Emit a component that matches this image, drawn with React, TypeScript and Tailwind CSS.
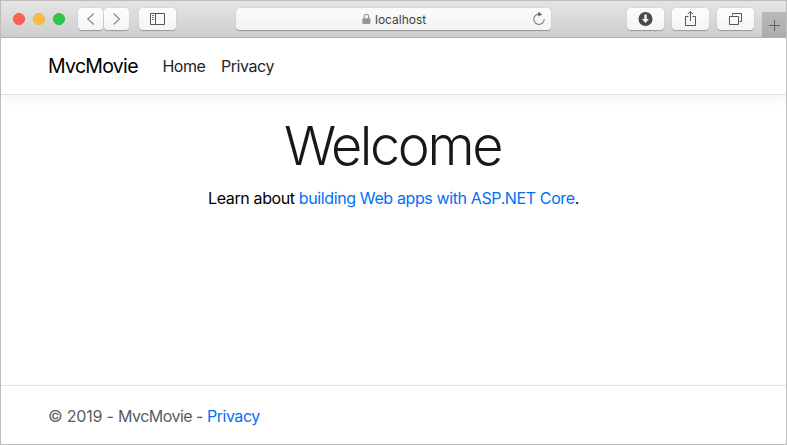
import type { ReactNode } from "react";

function ToolButton({ label, className, children }: { label: string; className: string; children: ReactNode }) {
  return (
    <button
      aria-label={label}
      className={`flex h-[22px] shrink-0 items-center justify-center rounded-[4px] bg-linear-to-b from-[#fdfdfd] to-[#f4f4f4] shadow-[0_0.5px_1px_rgba(0,0,0,0.28)] ${className}`}
    >
      {children}
    </button>
  );
}

function Toolbar() {
  return (
    <div className="flex h-[37px] shrink-0 items-start border-b border-[#b1b1b1] bg-linear-to-b from-[#e5e5e5] to-[#cecece] pl-3">
      <div className="mt-3 flex gap-2">
        <span className="size-3 rounded-full border border-[#ef5550] bg-[#fc605c]" />
        <span className="size-3 rounded-full border border-[#efb23b] bg-[#fdbc40]" />
        <span className="size-3 rounded-full border border-[#27bb3d] bg-[#30c748]" />
      </div>

      <div className="mt-[7px] ml-[13px] flex gap-[1px]">
        <ToolButton label="Back" className="w-[25px]">
          <svg width="25" height="22" fill="none" stroke="#8a8a8a" strokeWidth="1.2">
            <path d="M15.8 5.5 9.8 11l6 5.5" />
          </svg>
        </ToolButton>
        <ToolButton label="Forward" className="w-[25px]">
          <svg width="25" height="22" fill="none" stroke="#8a8a8a" strokeWidth="1.2">
            <path d="m9.5 5.5 6 5.5-6 5.5" />
          </svg>
        </ToolButton>
      </div>

      <ToolButton label="Sidebar" className="mt-[7px] ml-[10px] w-[37px]">
        <svg width="37" height="22" fill="none" stroke="#555" strokeWidth="1">
          <path d="M11.5 5.5h14v11h-14zM16.5 5.5v11" />
          <path d="M13 7.5h2M13 9.5h2M13 11.5h2" stroke="#777" />
        </svg>
      </ToolButton>

      <div className="mt-[7px] ml-[60px] flex h-[22px] w-[315px] items-center rounded-[4px] bg-linear-to-b from-[#fbfbfb] to-[#f3f3f3] shadow-[0_0.5px_1px_rgba(0,0,0,0.3)]">
        <svg className="ml-[126px] shrink-0" width="9" height="12" fill="none">
          <path d="M2.2 6V3.7a2.2 2.5 0 0 1 4.4 0V6" stroke="#969696" strokeWidth="1.1" />
          <rect x=".4" y="5.2" width="8" height="5.8" rx=".7" fill="#969696" />
        </svg>
        <span className="ml-1 pt-px text-[12px] leading-[22px] text-[#3f3f3f]">localhost</span>
        <svg className="mr-[5px] ml-auto shrink-0" width="14" height="22" fill="none">
          <path d="M7 6.1a5.2 5.2 0 1 0 5.2 5.2" stroke="#777" strokeWidth="1.1" />
          <path d="M6.2 3.8v4.8l4.2-2.2z" fill="#666" />
        </svg>
      </div>

      <div className="mt-[7px] ml-[76px] flex gap-2">
        <ToolButton label="Downloads" className="w-[37px]">
          <svg width="37" height="22">
            <circle cx="18.5" cy="11" r="7" fill="#4a4a4a" />
            <path d="M17.3 6.5h2.4V11H22l-3.5 4-3.5-4h2.3z" fill="#fafafa" />
          </svg>
        </ToolButton>
        <ToolButton label="Share" className="w-[37px]">
          <svg width="37" height="22" fill="none" stroke="#555" strokeWidth="1">
            <path d="M16.5 8.5h-3v9h10v-9h-3M18.5 13V3.7M15.8 6.3l2.7-2.7 2.7 2.7" />
          </svg>
        </ToolButton>
        <ToolButton label="Tabs" className="w-[37px]">
          <svg width="37" height="22" fill="none" stroke="#555" strokeWidth="1">
            <path d="M12.5 8.5h9v8h-9zM15.5 7.5v-2h9v8h-2" />
          </svg>
        </ToolButton>
      </div>

      <button aria-label="New tab" className="mt-[11px] ml-auto h-[25px] w-6 bg-linear-to-b from-[#b9b9b9] to-[#adadad]">
        <svg width="24" height="25" stroke="#5f5f5f" strokeWidth="1">
          <path d="M7 13.5h11M12.5 8v11" />
        </svg>
      </button>
    </div>
  );
}

export default function App() {
  return (
    <div className="flex h-[445px] w-[787px] flex-col overflow-hidden border border-[#bdbdbd] bg-white font-['Inter',sans-serif] text-[#212529]">
      <Toolbar />

      <nav className="flex h-[57px] shrink-0 items-center border-b border-[#dee2e6] pl-[47px] shadow-[0_4px_12px_rgba(0,0,0,0.05)]">
        <a className="w-[114px] pt-px text-[19.5px] tracking-[-0.7px] text-black">MvcMovie</a>
        <a className="w-[59px] pl-[0.4px] text-[16px] tracking-[-0.45px]">Home</a>
        <a className="text-[16px] tracking-[-0.45px]">Privacy</a>
      </nav>

      <main className="flex grow flex-col items-center pt-[18px]">
        <h1 className="pr-[2px] text-[54px] leading-[66px] font-light tracking-[-2.4px] text-[#15191d]">Welcome</h1>
        <p className="mt-[7px] text-[16px] leading-6 tracking-[-0.38px] text-black">
          Learn about <a className="text-[#0070f8]">building Web apps with ASP.NET Core</a>.
        </p>
      </main>

      <footer className="flex h-[59px] shrink-0 items-center border-t border-[#dee2e6] pt-px pl-[47px] text-[16px] whitespace-pre text-[#555d65]">
        <span className="tracking-[-0.2px]">© 2019 - </span>
        <span className="tracking-[-0.52px]">MvcMovie - </span>
        <a className="tracking-[-0.45px] text-[#0070f8]">Privacy</a>
      </footer>
    </div>
  );
}
